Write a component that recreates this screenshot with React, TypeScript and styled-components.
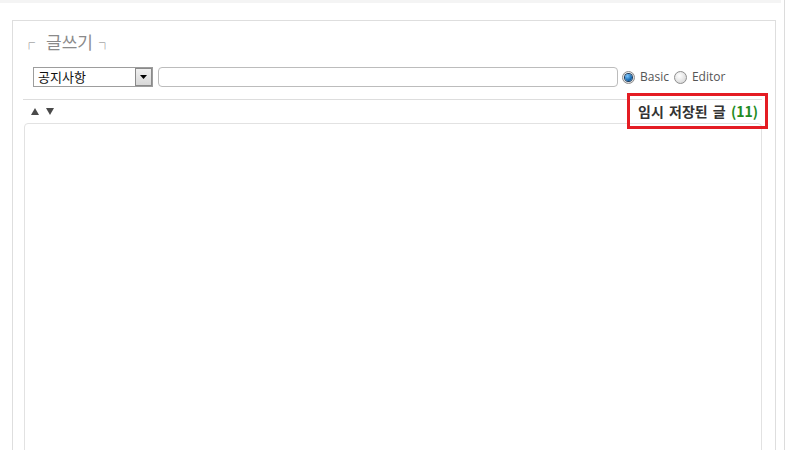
import React from "react";
import styled, { createGlobalStyle } from "styled-components";

const Global = createGlobalStyle`
  html, body { margin: 0; padding: 0; overflow: hidden; background: #fff; }
  body { font-family: "Noto Sans CJK KR", "Noto Sans", sans-serif; }
  * { box-sizing: border-box; }
`;

const Page = styled.div`
  display: flex;
  width: 793px;
  height: 450px;
  overflow: hidden;
  background: #fff;
`;

const Main = styled.div`
  width: 781px;
  display: flex;
  flex-direction: column;
  overflow: hidden;
`;

const TopStrip = styled.div`
  flex-shrink: 0;
  height: 3px;
  background: #f4f4f4;
`;

const RightRule = styled.div`
  flex-shrink: 0;
  margin-left: 3px;
  width: 1px;
  height: 100%;
  background: #dcdcdc;
`;

const Panel = styled.section`
  flex-shrink: 0;
  margin: 17px 0 0 12px;
  width: 764px;
  border: 1px solid #dedede;
  border-bottom: none;
  padding: 8px 13px 0 10px;
  display: flex;
  flex-direction: column;
  & > * {
    flex-shrink: 0;
  }
`;

const Title = styled.h2`
  margin: 0;
  height: 24px;
  display: flex;
  align-items: baseline;
  padding-top: 1px;
  font-size: 17px;
  line-height: 23px;
  font-weight: normal;
  color: #8a8a8a;
  font-family: "Noto Sans CJK KR", sans-serif;
`;

const Corner = styled.span<{ $side: "left" | "right" }>`
  font-family: "Noto Sans CJK KR", sans-serif;
  font-size: 12px;
  color: #7d7d7d;
  position: relative;
  top: -1px;
  margin: ${(p) => (p.$side === "left" ? "0 11px 0 0" : "0 0 0 6px")};
`;

const Toolbar = styled.div`
  display: flex;
  align-items: center;
  margin-top: 14px;
  padding: 0 0 12px 10px;
  border-bottom: 1px solid #dddddd;
`;

const SelectBox = styled.div`
  width: 120px;
  height: 20px;
  border: 1px solid #9d9d9d;
  display: flex;
  align-items: stretch;
  background: #fff;
`;

const SelectText = styled.span`
  flex: 1;
  padding-left: 4px;
  font-size: 13px;
  line-height: 18px;
  color: #111;
  font-family: "Noto Sans CJK KR", sans-serif;
`;

const SelectButton = styled.span`
  width: 17px;
  border: 1px solid #8a8a8a;
  background: linear-gradient(#f0f0f0, #d8d8d8);
  display: flex;
  align-items: center;
  justify-content: center;
`;

const TextInput = styled.input`
  margin-left: 5px;
  width: 460px;
  height: 20px;
  border: 1px solid #bcbcbc;
  border-radius: 4px;
  outline: none;
  padding: 0 4px;
  background: #fff;
`;

const RadioGroup = styled.div`
  display: flex;
  align-items: center;
  margin-left: 4px;
`;

const RadioMark = styled.span<{ $on?: boolean }>`
  width: 13px;
  height: 13px;
  border-radius: 50%;
  border: 1px solid #8e8e8e;
  background: radial-gradient(circle at 40% 35%, #ffffff, #cfcfcf);
  display: flex;
  align-items: center;
  justify-content: center;
  margin-right: 5px;
  &::after {
    content: "";
    width: 7px;
    height: 7px;
    border-radius: 50%;
    display: ${(p) => (p.$on ? "block" : "none")};
    background: radial-gradient(circle at 35% 30%, #7cc8ff, #0a5ea8 70%);
    box-shadow: 0 0 0 1px #1b3a5c;
  }
`;

const RadioLabel = styled.span`
  font-family: "Open Sans", sans-serif;
  font-size: 12px;
  color: #555;
  margin-right: 5px;
  position: relative;
  top: -1px;
`;

const ArrowRow = styled.div`
  display: flex;
  align-items: center;
  justify-content: space-between;
  height: 23px;
  padding: 0 4px 0 8px;
`;

const Arrows = styled.span`
  display: flex;
  gap: 7px;
  align-items: center;
`;

const Saved = styled.span`
  position: relative;
  font-family: "Noto Sans CJK KR", sans-serif;
  font-size: 14px;
  font-weight: bold;
  color: #333;
  line-height: 23px;
  height: 23px;
  word-spacing: 2px;
  &::after {
    content: "";
    position: absolute;
    top: -7px;
    bottom: -6px;
    left: -11px;
    right: -10px;
    border: 3px solid #e41c23;
  }
`;

const Count = styled.span`
  color: #228b22;
`;

const Editor = styled.textarea`
  margin-left: 1px;
  height: 340px;
  border: 1px solid #e2e2e2;
  border-radius: 4px;
  resize: none;
  outline: none;
  background: #fff;
`;

const Tri = ({ up }: { up?: boolean }) => (
  <svg width="8" height="7" viewBox="0 0 8 7">
    <path d={up ? "M4 0 L8 7 L0 7 Z" : "M0 0 L8 0 L4 7 Z"} fill="#4a4a4a" />
  </svg>
);

export default function App() {
  return (
    <Page>
      <Global />
      <Main>
        <TopStrip />
        <Panel>
          <Title>
            <Corner $side="left">┌</Corner>
            글쓰기
            <Corner $side="right">┐</Corner>
          </Title>
          <Toolbar>
            <SelectBox>
              <SelectText>공지사항</SelectText>
              <SelectButton>
                <svg width="7" height="4" viewBox="0 0 7 4">
                  <path d="M0 0 L7 0 L3.5 4 Z" fill="#000" />
                </svg>
              </SelectButton>
            </SelectBox>
            <TextInput type="text" />
            <RadioGroup>
              <RadioMark $on />
              <RadioLabel>Basic</RadioLabel>
              <RadioMark />
              <RadioLabel>Editor</RadioLabel>
            </RadioGroup>
          </Toolbar>
          <ArrowRow>
            <Arrows>
              <Tri up />
              <Tri />
            </Arrows>
            <Saved>
              임시 저장된 글 <Count>(11)</Count>
            </Saved>
          </ArrowRow>
          <Editor />
        </Panel>
      </Main>
      <RightRule />
    </Page>
  );
}
